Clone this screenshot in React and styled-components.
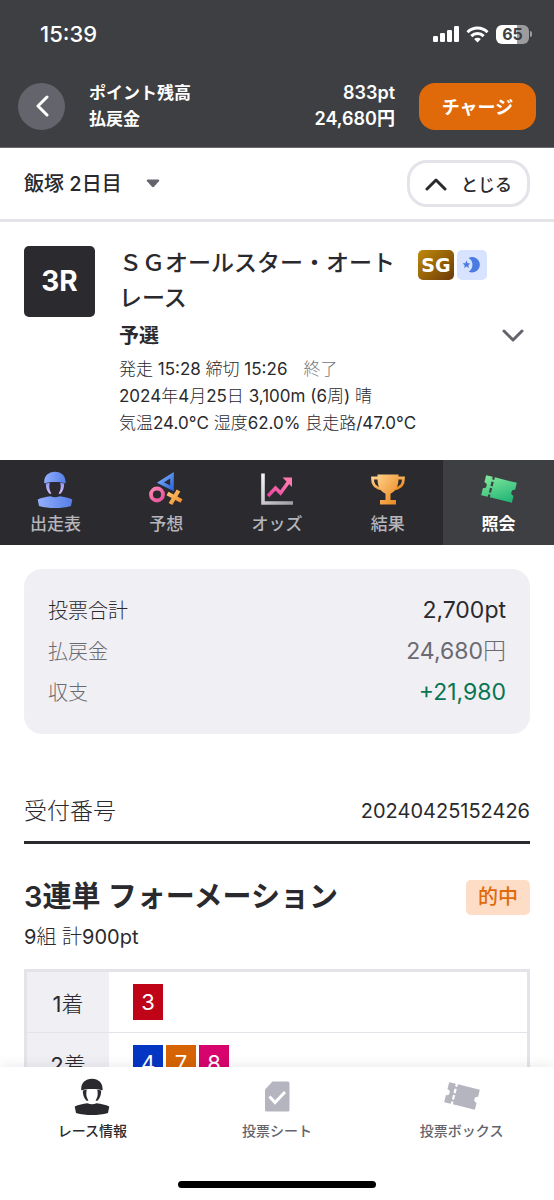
import React from 'react';
import styled, { createGlobalStyle } from 'styled-components';

const GlobalStyle = createGlobalStyle`
    * {
        box-sizing: border-box;
    }
    body {
        margin: 0;
        background: #fff;
        color: #2a2a2e;
        font-family: Inter, "Noto Sans CJK JP", sans-serif;
    }
    button, select {
        font-family: inherit;
        color: inherit;
        cursor: pointer;
    }
    h1, h2, p, dl, dd {
        margin: 0;
    }
    svg {
        display: block;
        flex-shrink: 0;
    }
`;

// regular latin digits next to light japanese
const lightFont = 'Inter, "Noto Sans CJK JP Light", "Noto Sans CJK JP", sans-serif';

const Page = styled.div`
    display: flex;
    flex-direction: column;
    height: 100vh;
`;

const Header = styled.header`
    background: #3e3f42;
    color: #fff;
    border-bottom: 1px solid #6a6a6e;
`;

const StatusBar = styled.div`
    display: flex;
    align-items: center;
    justify-content: space-between;
    height: 68px;
    padding: 0 22px 0 40px;
    font-size: 22px;
    font-weight: 500;
    .indicators{
        display: flex;
        align-items: center;
        gap: 7px;
    }
`;

const Battery = styled.div`
    display: flex;
    align-items: center;
    gap: 1px;
    .cell{
        width: 33px;
        height: 19px;
        border-radius: 6px;
        background: linear-gradient(90deg, #fff 65%, #9c9c9f 65%);
        color: #3e3f42;
        font-size: 16px;
        font-weight: 700;
        line-height: 19px;
        text-align: center;
    }
    .tip{
        width: 2px;
        height: 6px;
        border-radius: 0 2px 2px 0;
        background: #9c9c9f;
    }
`;

const AccountBar = styled.div`
    display: flex;
    align-items: center;
    gap: 24px;
    padding: 12px 18px 15px;
`;

const BackButton = styled.button`
    display: flex;
    align-items: center;
    justify-content: center;
    width: 47px;
    height: 47px;
    padding: 0;
    border: none;
    border-radius: 50%;
    background: #63646c;
`;

const Balance = styled.dl`
    flex: 1;
    font-size: 17px;
    font-weight: 600;
    line-height: 26px;
    div{
        display: flex;
        justify-content: space-between;
    }
    dd{
        font-size: 18px;
    }
`;

const ChargeButton = styled.button`
    width: 117px;
    height: 47px;
    padding: 0;
    border: none;
    border-radius: 16px;
    background: #e06a0a;
    && {
        color: #fff;
    }
    font-size: 18px;
    font-weight: 600;
`;

const DayBar = styled.div`
    display: flex;
    align-items: center;
    justify-content: space-between;
    padding: 12px 24px;
    border-bottom: 3px solid #e3e3e8;
`;

const DayPicker = styled.label`
    display: flex;
    align-items: center;
    gap: 24px;
    select{
        appearance: none;
        padding: 0;
        border: none;
        background: none;
        font-size: 20px;
        font-weight: 500;
        line-height: 30px;
    }
`;

const CloseButton = styled.button`
    display: flex;
    align-items: center;
    justify-content: center;
    gap: 14px;
    width: 123px;
    height: 47px;
    padding: 0;
    border: 3px solid #e3e3ea;
    border-radius: 20px;
    background: #fff;
    font-size: 17px;
    font-weight: 500;
`;

const Content = styled.main`
    flex: 1;
    min-height: 0;
    overflow-y: auto;
    scrollbar-width: none;
`;

const Race = styled.section`
    display: flex;
    gap: 24px;
    padding: 24px 24px 23px;
`;

const RaceNumber = styled.div`
    width: 71px;
    height: 71px;
    flex-shrink: 0;
    border-radius: 5px;
    background: #2a2a2f;
    color: #fff;
    font-size: 28px;
    font-weight: 700;
    line-height: 71px;
    text-align: center;
`;

const RaceInfo = styled.div`
    flex: 1;
    .title{
        display: flex;
        gap: 20px;
    }
    h1{
        width: 279px;
        font-size: 23px;
        font-weight: 500;
        line-height: 35px;
    }
    .stage{
        display: flex;
        align-items: center;
        justify-content: space-between;
        padding-right: 6px;
        font-size: 20px;
        font-weight: 600;
        line-height: 40px;
    }
    .detail{
        height: 27px;
        font-family: ${lightFont};
        font-size: 17px;
        line-height: 27px;
    }
    .closed{
        margin-left: 16px;
        color: #74747a;
    }
`;

const Badges = styled.div`
    display: flex;
    gap: 3px;
    padding-top: 4px;
`;

const GradeBadge = styled.span`
    width: 36px;
    height: 30px;
    border-radius: 5px;
    background: linear-gradient(135deg, #c08a08, #6b3a08);
    color: #fff;
    font-family: "DejaVu Sans", sans-serif;
    font-size: 19px;
    font-weight: 700;
    line-height: 30px;
    text-align: center;
`;

const NightBadge = styled.span`
    display: flex;
    align-items: center;
    justify-content: center;
    width: 30px;
    height: 30px;
    border-radius: 5px;
    background: #d8e3ff;
`;

const Tabs = styled.nav`
    display: grid;
    grid-template-columns: repeat(5, 1fr);
    background: #2a2a2f;
`;

const Tab = styled.a`
    display: flex;
    flex-direction: column;
    align-items: center;
    height: 85px;
    padding-top: 11px;
    background: ${props => props.$active ? '#3e3f42' : 'transparent'};
    color: ${props => props.$active ? '#fff' : '#b5b5bb'};
    font-size: 17px;
    font-weight: ${props => props.$active ? 600 : 500};
    line-height: 30px;
    text-decoration: none;
`;

const Summary = styled.dl`
    margin: 24px 24px 54px;
    padding: 21px 24px;
    border-radius: 18px;
    background: #f0eff4;
    font-family: ${lightFont};
`;

const SummaryRow = styled.div`
    display: flex;
    align-items: baseline;
    justify-content: space-between;
    height: 41px;
    color: ${props => props.$muted ? '#6a6a70' : '#2a2a2e'};
    font-size: 20px;
    line-height: 41px;
    dd{
        color: ${props => props.$gain ? '#087553' : 'inherit'};
        font-size: 23px;
    }
`;

const Ticket = styled.section`
    margin: 0 24px;
`;

const Receipt = styled.div`
    display: flex;
    align-items: center;
    justify-content: space-between;
    height: 56px;
    padding-bottom: 7px;
    border-bottom: 3px solid #2a2a2e;
    font-family: ${lightFont};
    font-size: 23px;
    line-height: 46px;
    .number{
        font-size: 20px;
    }
`;

const BetHeader = styled.div`
    display: flex;
    align-items: center;
    justify-content: space-between;
    margin-top: 32px;
    h2{
        font-size: 29px;
        font-weight: 600;
        line-height: 42px;
    }
`;

const HitTag = styled.span`
    padding: 0 12px;
    border-radius: 5px;
    background: #fdddc5;
    color: #e06a0a;
    font-size: 20px;
    font-weight: 500;
    line-height: 35px;
`;

const BetTotal = styled.p`
    height: 30px;
    margin: 4px 0 17px;
    font-family: ${lightFont};
    font-size: 20px;
    line-height: 30px;
`;

const BetTable = styled.table`
    width: 100%;
    border: 3px solid #e3e3ea;
    border-spacing: 0;
    th{
        width: 82px;
        padding: 0;
        background: #f0eff4;
        font-family: ${lightFont};
        font-size: 22px;
        font-weight: 400;
    }
    td{
        padding: 12px 24px;
    }
    tr + tr th, tr + tr td{
        border-top: 1px solid #e3e3ea;
    }
    .cars{
        display: flex;
        gap: 3px;
    }
`;

const Car = styled.span`
    width: 30px;
    height: 36px;
    background: ${props => props.$color};
    color: #fff;
    font-size: 22px;
    line-height: 36px;
    text-align: center;
`;

const BottomBar = styled.footer`
    position: relative;
    background: #fff;
    box-shadow: 0 -2px 12px rgba(0, 0, 0, 0.08);
`;

const BottomNav = styled.nav`
    display: grid;
    grid-template-columns: repeat(3, 1fr);
    padding: 11px 0 10px;
`;

const NavItem = styled.a`
    display: flex;
    flex-direction: column;
    align-items: center;
    gap: 1px;
    color: ${props => props.$active ? '#2a2a2e' : '#63646c'};
    font-size: 14px;
    font-weight: 500;
    line-height: 28px;
    text-decoration: none;
`;

const HomeIndicator = styled.div`
    width: 198px;
    height: 7px;
    margin: 26px auto 12px;
    border-radius: 4px;
    background: #000;
`;

const SignalIcon = () => (
    <svg width="26" height="16" viewBox="0 0 26 16" fill="#fff">
        <rect x="0" y="10" width="5" height="6" rx="1.3" />
        <rect x="7" y="7" width="5" height="9" rx="1.3" />
        <rect x="14" y="4" width="5" height="12" rx="1.3" />
        <rect x="21" y="0" width="5" height="16" rx="1.3" />
    </svg>
);

const WifiIcon = () => (
    <svg width="23" height="17" viewBox="0 0 23 17">
        <g fill="none" stroke="#fff" strokeWidth="3">
            <path d="M1.5 6.2a14.2 14.2 0 0 1 20 0" />
            <path d="M5.3 10.1a8.8 8.8 0 0 1 12.4 0" />
        </g>
        <path d="M11.5 16.6l-3.4-3.5a4.9 4.9 0 0 1 6.8 0z" fill="#fff" />
    </svg>
);

const Chevron = ({ width, height, d, color, stroke }) => (
    <svg width={width} height={height} viewBox={`0 0 ${width} ${height}`} fill="none"
        stroke={color} strokeWidth={stroke} strokeLinecap="round" strokeLinejoin="round">
        <path d={d} />
    </svg>
);

const NightIcon = () => (
    <svg width="18" height="18" viewBox="0 0 18 18" fill="#4a7be0">
        <path d="M5.6 1.9A7.7 7.7 0 1 1 5.6 15.6A8 8 0 0 0 5.6 1.9z" />
        <path d="M3.5 4.6l1.1 2.6 2.8.2-2.1 1.9.6 2.8-2.4-1.5-2.4 1.5.6-2.8L-.4 7.4l2.8-.2z" />
    </svg>
);

const RiderIcon = ({ colored }) => (
    <svg width="36" height="38" viewBox="0 0 36 38">
        <defs>
            <linearGradient id="rider" x1="0" y1="0" x2="1" y2="0">
                <stop offset="0" stopColor="#93aefc" />
                <stop offset="1" stopColor="#567fe8" />
            </linearGradient>
            <linearGradient id="strap" x1="0" y1="0" x2="0" y2="1">
                <stop offset="0" stopColor="#8f96f2" />
                <stop offset="1" stopColor="#dcc2fa" />
            </linearGradient>
        </defs>
        <g fill={colored ? 'url(#rider)' : '#2a2a2e'}>
            <path d="M7.2 12.2V11C7.2 5 11.5.8 18 .8S28.6 5 28.6 11v1.200c-3.500-1-6.800-1.300-10.600-1.300s-7.300.3-10.800 1.300z" />
            <path d="M13.500 25.200c2.800 1.500 6.200 1.500 9 0 4.700.5 9 1.500 12.800 3.200L34 35c-5 1.500-10.300 2-16 2s-11-.5-16-2L.7 28.400c3.800-1.700 8.100-2.700 12.800-3.200z" />
        </g>
        <g fill={colored ? 'url(#strap)' : '#2a2a2e'}>
            <path d="M8.800 12.400l4-.6c-.8 3.200-.8 6.200.8 9.200l.8 2-2.200-.6c-2.400-2.700-3.400-6-3.400-10z" />
            <path d="M27.200 12.400l-4-.6c.8 3.200.8 6.200-.8 9.200l-.8 2 2.200-.6c2.400-2.700 3.400-6 3.400-10z" />
        </g>
    </svg>
);

const ForecastIcon = () => (
    <svg width="36" height="38" viewBox="0 0 36 38" fill="none">
        <defs>
            <linearGradient id="tri" x1="0" y1="0" x2="1" y2="1">
                <stop offset="0" stopColor="#7aaaf8" />
                <stop offset="1" stopColor="#2f6be0" />
            </linearGradient>
            <linearGradient id="ring" x1="0" y1="0" x2="1" y2="1">
                <stop offset="0" stopColor="#ff86b4" />
                <stop offset="1" stopColor="#e8509a" />
            </linearGradient>
            <linearGradient id="cross" x1="0" y1="0" x2="1" y2="1">
                <stop offset="0" stopColor="#ffc875" />
                <stop offset="1" stopColor="#f08c28" />
            </linearGradient>
        </defs>
        <path d="M12.5 11.6L24 4.2v13.2z" stroke="url(#tri)" strokeWidth="3.6" />
        <circle cx="9" cy="23.5" r="6" stroke="url(#ring)" strokeWidth="3.8" />
        <path d="M19.5 22.5l14 7.5M30.5 19.5l-8 13.5" stroke="url(#cross)" strokeWidth="4.2" />
    </svg>
);

const OddsIcon = () => (
    <svg width="34" height="38" viewBox="0 0 34 38" fill="none">
        <defs>
            <linearGradient id="axis" x1="0" y1="0" x2="1" y2="1">
                <stop offset="0" stopColor="#f5f5f7" />
                <stop offset="1" stopColor="#9e9ea6" />
            </linearGradient>
            <linearGradient id="rise" x1="0" y1="1" x2="1" y2="0">
                <stop offset="0" stopColor="#e8409c" />
                <stop offset="1" stopColor="#ff7fb0" />
            </linearGradient>
        </defs>
        <path d="M3 2.5V32h30" stroke="url(#axis)" strokeWidth="3.6" />
        <path d="M8 25l7.5-8 5 5 8-11" stroke="url(#rise)" strokeWidth="3.6" />
        <path d="M22.5 6.5H32V16z" fill="#ff78b0" />
    </svg>
);

const TrophyIcon = () => (
    <svg width="36" height="38" viewBox="0 0 36 38">
        <defs>
            <linearGradient id="cup" x1="0" y1="0" x2="1" y2="1">
                <stop offset="0" stopColor="#ffd08a" />
                <stop offset="1" stopColor="#ea8418" />
            </linearGradient>
        </defs>
        <path d="M8 7H2.5c0 6 1.8 9 8.500 11M28 7h5.500c0 6-1.800 9-8.500 11" fill="none" stroke="url(#cup)" strokeWidth="2.8" />
        <path d="M7.5 3.500h21v4c0 7-2.200 12.500-8 15.300V29h5.500v4.500H10V29h5.500v-6.200c-5.800-2.800-8-8.300-8-15.300z" fill="url(#cup)" />
    </svg>
);

const TicketIcon = ({ colored }) => (
    <svg width="38" height="38" viewBox="0 0 38 38">
        <defs>
            <linearGradient id="ticket" x1="0" y1="0" x2="1" y2="1">
                <stop offset="0" stopColor="#84e89c" />
                <stop offset="1" stopColor="#1cb274" />
            </linearGradient>
        </defs>
        <g transform="translate(19 18) rotate(14)" fill={colored ? 'url(#ticket)' : '#b5b5bf'}>
            <path d="M-15.8-10.300H-9v2.600h2.200v-2.600H15.800V-3a3 3 0 0 0 0 6v7.300H-6.800v-2.600H-9v2.600h-6.800V3a3 3 0 0 0 0-6z" />
        </g>
        <path d="M-7.9-5.500v11.500" transform="translate(19 18) rotate(14)"
            stroke={colored ? '#3e3f42' : '#fff'} strokeWidth="2.2" strokeDasharray="4.5 2" />
    </svg>
);

const SheetIcon = () => (
    <svg width="38" height="38" viewBox="0 0 38 38">
        <path d="M14.5 3.500H30a1.500 1.500 0 0 1 1.500 1.500v27a1.500 1.500 0 0 1-1.500 1.500H8.500a1.500 1.500 0 0 1-1.500-1.500V11.500z" fill="#b5b5bf" />
        <path d="M11.500 18.500l5.500 6 10-10.500" fill="none" stroke="#fff" strokeWidth="3" />
    </svg>
);

const tabs = [
    { label: '出走表', icon: <RiderIcon colored /> },
    { label: '予想', icon: <ForecastIcon /> },
    { label: 'オッズ', icon: <OddsIcon /> },
    { label: '結果', icon: <TrophyIcon /> },
    { label: '照会', icon: <TicketIcon colored />, active: true }
];

const navItems = [
    { label: 'レース情報', icon: <RiderIcon />, active: true },
    { label: '投票シート', icon: <SheetIcon /> },
    { label: '投票ボックス', icon: <TicketIcon /> }
];

const carColors = {
    3: '#c00418',
    4: '#0436c4',
    7: '#d66404',
    8: '#d6046c'
};

const bets = [
    { place: '1着', cars: [3] },
    { place: '2着', cars: [4, 7, 8] }
];

const App = () => {
    return (
        <Page>
            <GlobalStyle />
            <Header>
                <StatusBar>
                    <span>15:39</span>
                    <div className="indicators">
                        <SignalIcon />
                        <WifiIcon />
                        <Battery>
                            <div className="cell">65</div>
                            <div className="tip" />
                        </Battery>
                    </div>
                </StatusBar>
                <AccountBar>
                    <BackButton aria-label="戻る">
                        <Chevron width={14} height={22} d="M12 2L3 11l9 9" color="#fff" stroke={3} />
                    </BackButton>
                    <Balance>
                        <div><dt>ポイント残高</dt><dd>833pt</dd></div>
                        <div><dt>払戻金</dt><dd>24,680円</dd></div>
                    </Balance>
                    <ChargeButton>チャージ</ChargeButton>
                </AccountBar>
            </Header>
            <DayBar>
                <DayPicker>
                    <select aria-label="開催日">
                        <option>飯塚 2日目</option>
                    </select>
                    <svg width="14" height="9" viewBox="0 0 14 9" fill="#63646c">
                        <path d="M2 .5h10c1.2 0 1.6 1 .9 1.8L8.2 7.6c-.7.7-1.7.7-2.4 0L1.1 2.3C.4 1.5.8.5 2 .5z" />
                    </svg>
                </DayPicker>
                <CloseButton>
                    <Chevron width={22} height={14} d="M2 12l9-9 9 9" color="#2a2a2e" stroke={3} />
                    とじる
                </CloseButton>
            </DayBar>
            <Content>
                <Race>
                    <RaceNumber>3R</RaceNumber>
                    <RaceInfo>
                        <div className="title">
                            <h1>ＳＧオールスター・オートレース</h1>
                            <Badges>
                                <GradeBadge>SG</GradeBadge>
                                <NightBadge><NightIcon /></NightBadge>
                            </Badges>
                        </div>
                        <div className="stage">
                            予選
                            <Chevron width={22} height={14} d="M2 2l9 9 9-9" color="#63646c" stroke={3} />
                        </div>
                        <p className="detail">発走 15:28 締切 15:26<span className="closed">終了</span></p>
                        <p className="detail">2024年4月25日 3,100m (6周) 晴</p>
                        <p className="detail">気温24.0°C 湿度62.0% 良走路/47.0°C</p>
                    </RaceInfo>
                </Race>
                <Tabs>
                    {tabs.map(tab => (
                        <Tab key={tab.label} href="#" $active={tab.active}>
                            {tab.icon}
                            {tab.label}
                        </Tab>
                    ))}
                </Tabs>
                <Summary>
                    <SummaryRow><dt>投票合計</dt><dd>2,700pt</dd></SummaryRow>
                    <SummaryRow $muted><dt>払戻金</dt><dd>24,680円</dd></SummaryRow>
                    <SummaryRow $muted $gain><dt>収支</dt><dd>+21,980</dd></SummaryRow>
                </Summary>
                <Ticket>
                    <Receipt>
                        <span>受付番号</span>
                        <span className="number">20240425152426</span>
                    </Receipt>
                    <BetHeader>
                        <h2>3連単 フォーメーション</h2>
                        <HitTag>的中</HitTag>
                    </BetHeader>
                    <BetTotal>9組 計900pt</BetTotal>
                    <BetTable>
                        <tbody>
                            {bets.map(bet => (
                                <tr key={bet.place}>
                                    <th scope="row">{bet.place}</th>
                                    <td>
                                        <div className="cars">
                                            {bet.cars.map(car => (
                                                <Car key={car} $color={carColors[car]}>{car}</Car>
                                            ))}
                                        </div>
                                    </td>
                                </tr>
                            ))}
                        </tbody>
                    </BetTable>
                </Ticket>
            </Content>
            <BottomBar>
                <BottomNav>
                    {navItems.map(item => (
                        <NavItem key={item.label} href="#" $active={item.active}>
                            {item.icon}
                            {item.label}
                        </NavItem>
                    ))}
                </BottomNav>
                <HomeIndicator />
            </BottomBar>
        </Page>
    );
}

export default App
